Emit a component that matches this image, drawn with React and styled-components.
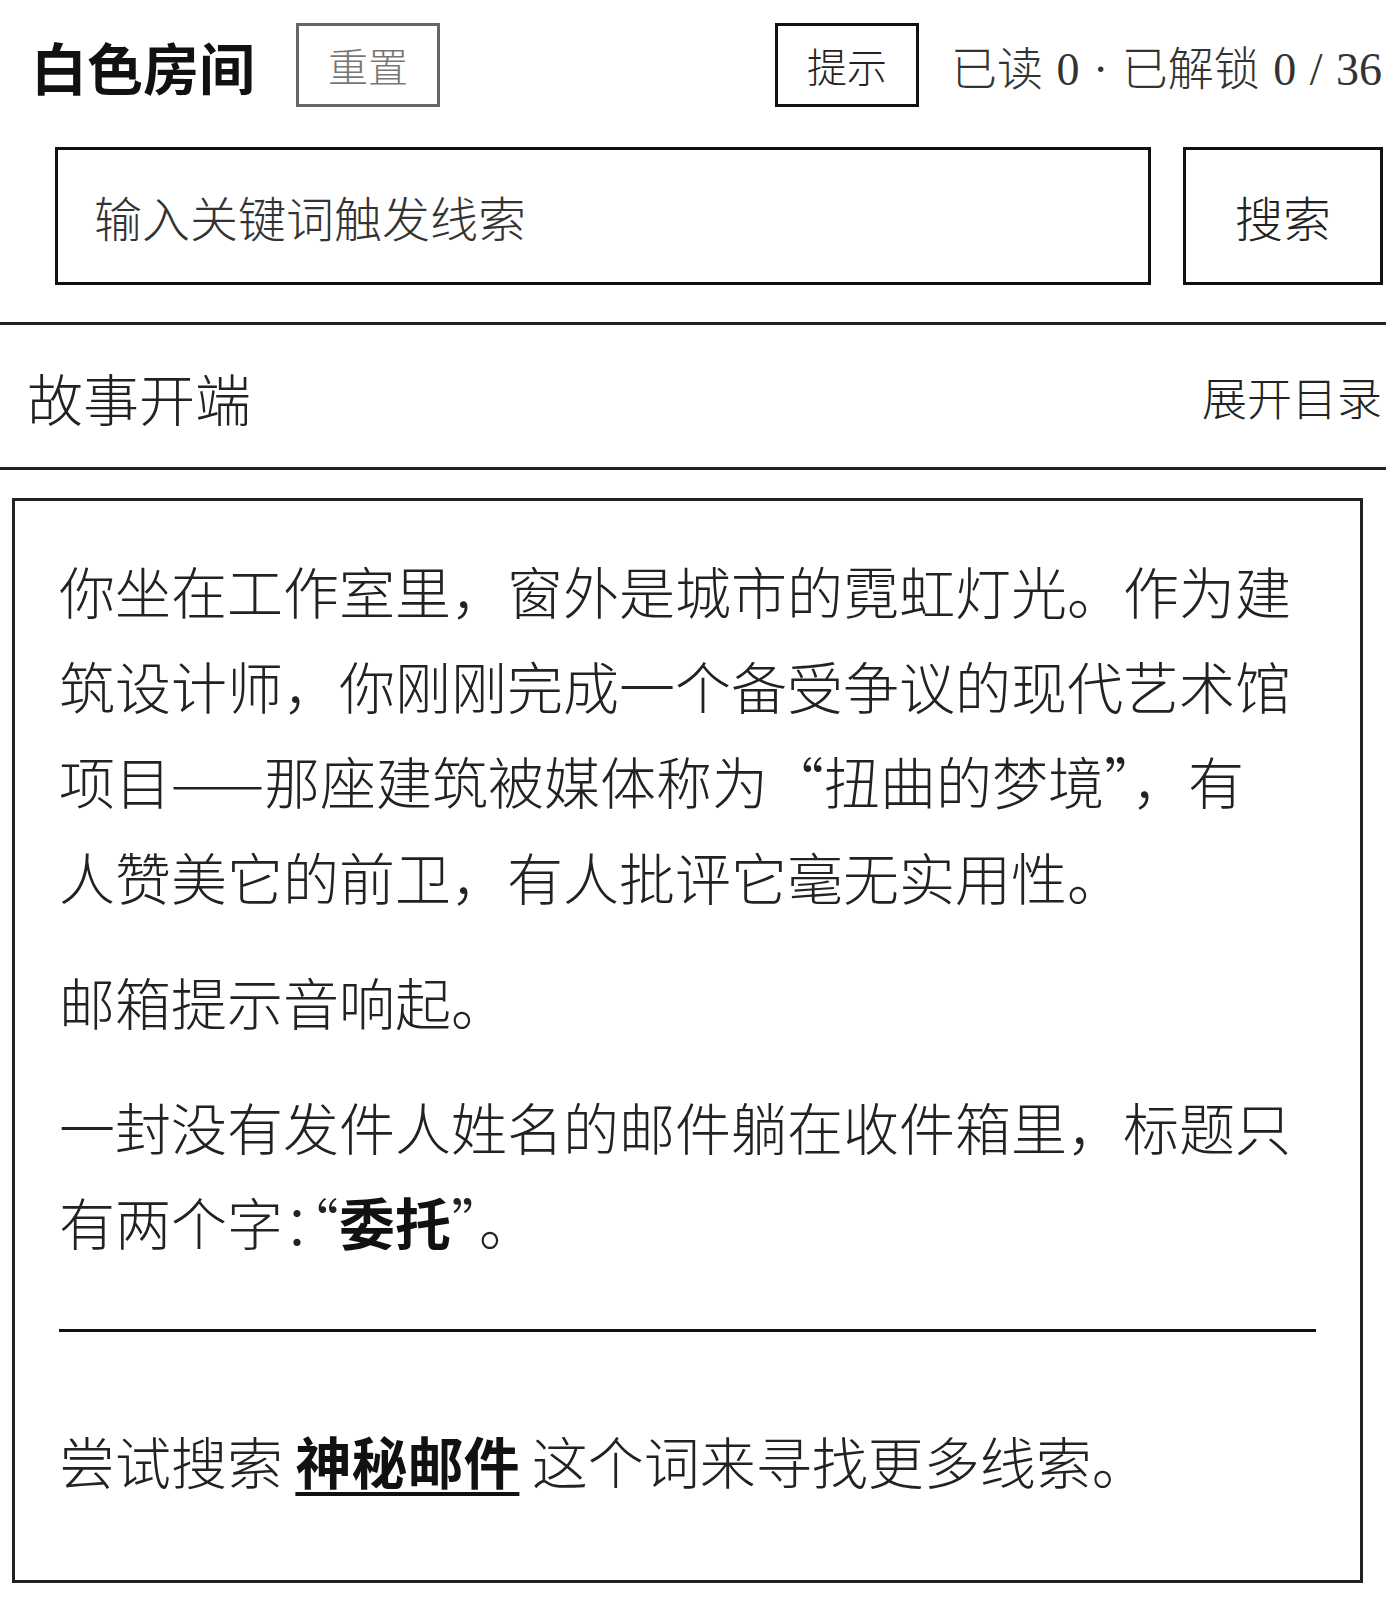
import React from 'react';
import styled, { createGlobalStyle } from 'styled-components';

const GlobalStyle = createGlobalStyle`
  * {
    box-sizing: border-box;
  }
  body {
    margin: 0;
    background: #fff;
    color: #222;
    font-family: "Noto Sans CJK SC", "Liberation Serif", serif;
    font-weight: 300;
  }
`;

const Page = styled.div`
  width: 1386px;
  padding-bottom: 12px;
`;

const Header = styled.header`
  display: flex;
  align-items: center;
  justify-content: space-between;
  padding: 23px 4px 0 31px;
`;

const Group = styled.div`
  display: flex;
  align-items: center;
  gap: ${(p) => p.gap || 0}px;
`;

const Title = styled.h1`
  margin: 0;
  font-size: 56px;
  font-weight: 700;
  color: #111;
`;

const Button = styled.button`
  height: 84px;
  padding: 0 29px;
  background: #fff;
  border: 3px solid ${(p) => (p.muted ? '#666' : '#111')};
  color: ${(p) => (p.muted ? '#777' : '#222')};
  font-family: inherit;
  font-weight: 300;
  font-size: 40px;
  cursor: pointer;
`;

const Stats = styled.span`
  font-family: "Liberation Serif", "Noto Sans CJK SC", serif;
  font-size: 46px;
  word-spacing: 2px;
  color: #333;
  white-space: nowrap;
`;

const SearchRow = styled.div`
  display: flex;
  gap: 32px;
  padding: 40px 3px 0 55px;
`;

const SearchInput = styled.input`
  flex: 1;
  height: 138px;
  padding: 0 36px;
  border: 3px solid #111;
  font-family: inherit;
  font-weight: 300;
  font-size: 48px;
  color: #222;
  outline: none;

  &::placeholder {
    color: #333;
  }
`;

const SearchButton = styled.button`
  width: 200px;
  height: 138px;
  background: #fff;
  border: 3px solid #111;
  font-family: inherit;
  font-weight: 300;
  font-size: 48px;
  color: #222;
  cursor: pointer;
`;

const ChapterBar = styled.div`
  display: flex;
  align-items: center;
  justify-content: space-between;
  height: 148px;
  margin-top: 37px;
  padding: 0 4px 0 27px;
  border-top: 3px solid #222;
  border-bottom: 3px solid #222;
`;

const ChapterTitle = styled.h2`
  margin: 0;
  font-size: 56px;
  font-weight: 300;
  color: #222;
`;

const TocToggle = styled.span`
  font-size: 45px;
  color: #222;
  cursor: pointer;
`;

const Card = styled.article`
  margin: 28px 23px 0 12px;
  padding: 41px 44px 72px;
  border: 3px solid #222;
`;

const Paragraph = styled.p`
  margin: 0 0 30px;
  padding-right: 20px;
  font-size: 56px;
  line-height: 1.7;
  color: #222;

  &:last-of-type {
    margin-bottom: 0;
  }
`;

const Strong = styled.strong`
  font-weight: 700;
  color: #111;
`;

// 全角标点半宽
const Half = styled.span`
  font-feature-settings: "halt";
`;

const Divider = styled.hr`
  margin: 61px 0 80px;
  border: 0;
  border-top: 3px solid #111;
`;

const Hint = styled.div`
  font-size: 56px;
  line-height: 1.7;
  color: #222;
`;

const Keyword = styled.a`
  font-weight: 700;
  color: #111;
  text-decoration: underline;
  text-decoration-thickness: 4px;
  text-underline-offset: 8px;
  cursor: pointer;
`;

const story = [
  '你坐在工作室里，窗外是城市的霓虹灯光。作为建筑设计师，你刚刚完成一个备受争议的现代艺术馆项目——那座建筑被媒体称为“扭曲的梦境”，有人赞美它的前卫，有人批评它毫无实用性。',
  '邮箱提示音响起。',
];

export default function App() {
  return (
    <Page>
      <GlobalStyle />
      <Header>
        <Group gap={41}>
          <Title>白色房间</Title>
          <Button muted>重置</Button>
        </Group>
        <Group gap={32}>
          <Button>提示</Button>
          <Stats>已读 0 · 已解锁 0 / 36</Stats>
        </Group>
      </Header>

      <SearchRow>
        <SearchInput placeholder="输入关键词触发线索" />
        <SearchButton>搜索</SearchButton>
      </SearchRow>

      <ChapterBar>
        <ChapterTitle>故事开端</ChapterTitle>
        <TocToggle>展开目录</TocToggle>
      </ChapterBar>

      <Card>
        {story.map((text, i) => (
          <Paragraph key={i}>{text}</Paragraph>
        ))}
        <Paragraph>
          一封没有发件人姓名的邮件躺在收件箱里，标题只有两个字<Half>：</Half>“<Strong>委托</Strong>”。
        </Paragraph>
        <Divider />
        <Hint>
          尝试搜索 <Keyword>神秘邮件</Keyword> 这个词来寻找更多线索。
        </Hint>
      </Card>
    </Page>
  );
}
